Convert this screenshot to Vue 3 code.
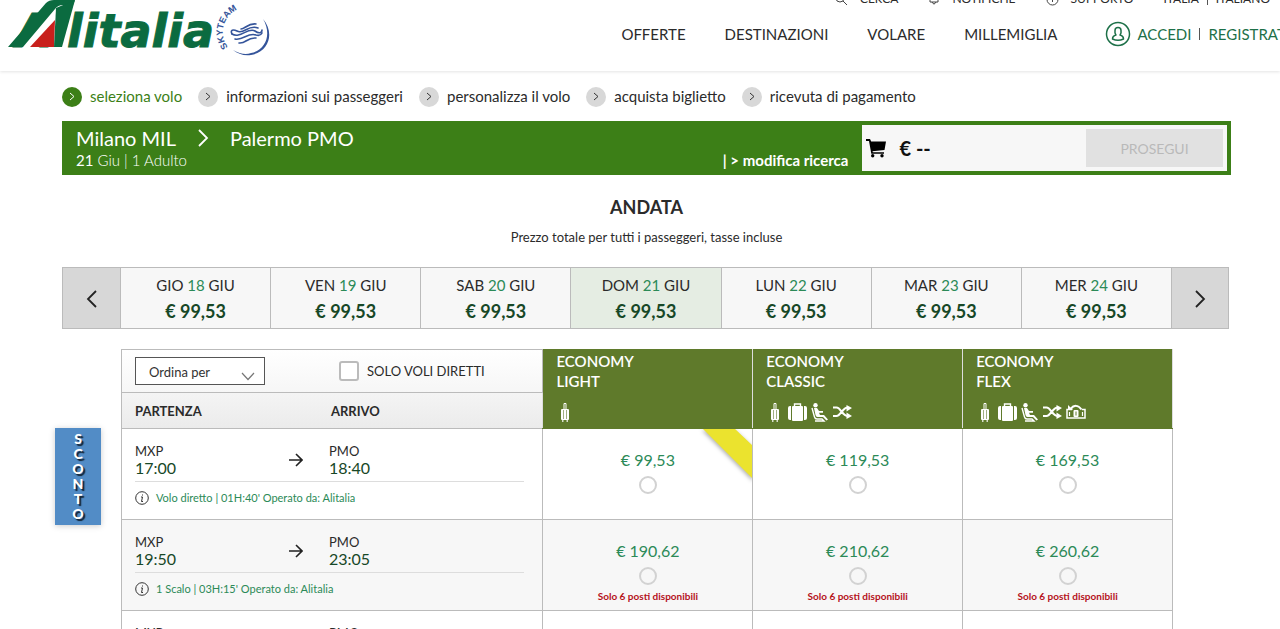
<script setup>
import { ref } from 'vue'

const steps = [
  'seleziona volo',
  'informazioni sui passeggeri',
  'personalizza il volo',
  'acquista biglietto',
  'ricevuta di pagamento',
]

const days = [
  { name: 'GIO', num: 18 },
  { name: 'VEN', num: 19 },
  { name: 'SAB', num: 20 },
  { name: 'DOM', num: 21 },
  { name: 'LUN', num: 22 },
  { name: 'MAR', num: 23 },
  { name: 'MER', num: 24 },
]
const selectedDay = ref(21)

const fares = [
  { name: 'LIGHT', icons: ['trolley'] },
  { name: 'CLASSIC', icons: ['trolley', 'bag', 'seat', 'change'] },
  { name: 'FLEX', icons: ['trolley', 'bag', 'seat', 'change', 'refund'] },
]

const flights = [
  { dep: '17:00', arr: '18:40', info: "Volo diretto | 01H:40' Operato da: Alitalia", prices: ['99,53', '119,53', '169,53'], best: 0 },
  { dep: '19:50', arr: '23:05', info: "1 Scalo | 03H:15' Operato da: Alitalia", prices: ['190,62', '210,62', '260,62'], seats: 'Solo 6 posti disponibili' },
  { prices: ['', '', ''] },
]
const choice = ref('')
const directOnly = ref(false)
</script>

<template>
  <div class="page">
    <header class="header">
      <a class="brand" href="#" aria-label="Alitalia SkyTeam">
        <svg width="280" height="64" viewBox="0 0 280 64">
          <text class="word" x="16" y="47" font-size="46">A</text>
          <path d="M20 47L55 6L56 47Z" fill="#fff" />
          <path d="M8 47L46 3Q49 0 54 0H75L73 5H63Q58 5 55 9L23 47Z" fill="#0b6b40" />
          <path d="M30 47L55 20L54 47Z" fill="#c8201c" />
          <path d="M56 8L75 0L62 47H54Z" fill="#0b6b40" />
          <text class="word" x="67" y="47" font-size="46">litalia</text>
          <path id="sky-arc" d="M228 47A23 23 0 0 1 266 17" fill="none" />
          <text class="sky" font-size="9"><textPath href="#sky-arc">SKYTEAM</textPath></text>
          <path d="M263 19C275 33 269 52 251 55C244 56 238 54 233 50C240 54 246 55 251 53C266 50 272 34 263 19Z" fill="#34549a" />
          <g fill="none" stroke="#34549a" stroke-width="1.600" stroke-linecap="round">
            <path d="M232 34C230 30 233 29 237 31C244 35 248 24 258 28" />
            <path d="M232 34C240 39 248 27 255 31C259 34 262 33 262 30" />
            <path d="M235 39C243 41 248 32 256 35C259 36 261 35 262 33" />
            <path d="M239 43C246 44 247 37 256 38" />
            <path d="M241 29C245 29 248 23 256 24" />
          </g>
        </svg>
      </a>
      <div class="menus">
        <div class="utility">
          <a href="#"><svg width="13" height="13" viewBox="0 0 13 13" class="line"><circle cx="5" cy="5" r="4" /><path d="M8 8l4 4" /></svg>CERCA</a>
          <a href="#"><svg width="12" height="12" viewBox="0 0 12 12" class="line"><path d="M2 9V5a4 4 0 0 1 8 0v4zM4 9q2 4 4 0" /></svg>NOTIFICHE</a>
          <a href="#"><svg width="13" height="13" viewBox="0 0 13 13" class="line"><circle cx="6.500" cy="6.500" r="5.500" /><path d="M5 5q1.500-2 3 0l-1.500 2v2" /></svg>SUPPORTO</a>
          <span class="locale"><a href="#">ITALIA</a><i></i><a href="#">ITALIANO</a></span>
        </div>
        <div class="mainrow">
          <nav class="nav">
            <a href="#">OFFERTE</a>
            <a href="#">DESTINAZIONI</a>
            <a href="#">VOLARE</a>
            <a href="#">MILLEMIGLIA</a>
          </nav>
          <div class="account">
            <svg width="26" height="26" viewBox="0 0 26 26" fill="none" stroke="#1d7048" stroke-width="1.500">
              <circle cx="13" cy="13" r="11.500" />
              <path d="M10 12V9.500Q10 6.500 13 6.500T16 9.500V12L15 14Q18.500 15 18.500 18Q13 20.500 7.500 18Q7.500 15 11 14Z" stroke-linejoin="round" />
            </svg>
            <a href="#">ACCEDI</a><i></i><a href="#">REGISTRATI</a>
          </div>
        </div>
      </div>
    </header>

    <main>
      <ol class="steps">
        <li v-for="(s, i) in steps" :key="s" :class="{ active: i === 0 }">
          <span class="dot"><svg width="6" height="10" viewBox="0 0 6 10"><path d="M1 1l4 3.500-4 3.500" /></svg></span>{{ s }}
        </li>
      </ol>

      <section class="route">
        <div class="trip">
          <div class="cities">
            <span>Milano MIL</span>
            <svg width="12" height="20" viewBox="0 0 12 20"><path d="M2 2l8 8-8 8" fill="none" stroke="#fff" stroke-width="1.800" /></svg>
            <span>Palermo PMO</span>
          </div>
          <div class="detail"><b>21</b> Giu | 1 Adulto</div>
        </div>
        <a class="modify" href="#">| &gt; modifica ricerca</a>
        <div class="cart">
          <svg width="21" height="20" viewBox="0 0 21 20">
            <path d="M0 1h4l1.200 2.500H20L18.500 12 6.500 13.200l.3 1H18v1.600H5.300L3 3H0z" />
            <circle cx="6.700" cy="17.800" r="1.700" /><circle cx="16" cy="17.800" r="1.700" />
          </svg>
          <strong>€ --</strong>
          <button class="proceed" disabled>PROSEGUI</button>
        </div>
      </section>

      <h1>ANDATA</h1>
      <p class="note">Prezzo totale per tutti i passeggeri, tasse incluse</p>

      <div class="days">
        <button class="arrow" aria-label="Giorni precedenti"><svg width="12" height="20" viewBox="0 0 12 20"><path d="M10 2L2 10l8 8" /></svg></button>
        <button v-for="d in days" :key="d.num" class="day" :class="{ sel: d.num === selectedDay }" @click="selectedDay = d.num">
          <span>{{ d.name }} <em>{{ d.num }}</em> GIU</span>
          <strong>€ 99,53</strong>
        </button>
        <button class="arrow" aria-label="Giorni successivi"><svg width="12" height="20" viewBox="0 0 12 20"><path d="M2 2l8 8-8 8" /></svg></button>
      </div>

      <div class="results">
        <table>
          <colgroup>
            <col class="c-dep" /><col class="c-arr" /><col class="c-fare" /><col class="c-fare" /><col class="c-fare" />
          </colgroup>
          <thead>
            <tr class="tools">
              <td colspan="2">
                <div class="toolbar">
                  <span class="sort">
                    <select aria-label="Ordina per"><option>Ordina per</option></select>
                    <svg width="14" height="9" viewBox="0 0 14 9"><path d="M1 1l6 6.500L13 1" fill="none" stroke="#777" stroke-width="1.200" /></svg>
                  </span>
                  <label class="direct"><input v-model="directOnly" type="checkbox" />SOLO VOLI DIRETTI</label>
                </div>
              </td>
              <th v-for="f in fares" :key="f.name" rowspan="2" class="fare" scope="col">
                <div>ECONOMY<br />{{ f.name }}</div>
                <div class="icons">
                  <template v-for="ic in f.icons" :key="ic">
                    <svg v-if="ic === 'trolley'" class="trolley" width="10" height="20" viewBox="0 0 10 20">
                      <path d="M4 7V1.500h2V7" fill="none" stroke="#fff" stroke-width="1" />
                      <rect x="1" y="7" width="8" height="11" rx="1" fill="#fff" />
                      <path d="M3.500 8v9M6.500 8v9" stroke="#5f7a2b" stroke-width=".6" /><path d="M2 19h1.500M6.500 19H8" stroke="#fff" stroke-width="1.500" />
                    </svg>
                    <svg v-else-if="ic === 'bag'" width="19" height="18" viewBox="0 0 19 18" fill="#fff">
                      <rect x="4" y="3" width="11" height="15" rx="1" />
                      <path d="M3 3H2Q0 3 0 5v10q0 2 2 2h1zM16 3h1q2 0 2 2v10q0 2-2 2h-1z" />
                      <path d="M6.500 3V1h6v2" fill="none" stroke="#fff" stroke-width="1.400" />
                    </svg>
                    <svg v-else-if="ic === 'seat'" width="18" height="19" viewBox="0 0 18 19">
                      <circle cx="4.500" cy="2.200" r="2.200" fill="#fff" />
                      <path d="M3 5h3l2 3h4v1.700H8L9 12h4l4 4.500-1.500 1L12 14H6.500Q5 14 4.500 12z" fill="#fff" />
                      <path d="M1 5l2.500 9q.5 2 2.500 2h5l2 2H4" fill="none" stroke="#fff" stroke-width="1.400" />
                    </svg>
                    <svg v-else-if="ic === 'change'" width="19" height="14" viewBox="0 0 19 14">
                      <path d="M0 2.500h3.500C8 2.500 9 11 15 11M0 11h3.500C8 11 9 2.500 15 2.500" fill="none" stroke="#fff" stroke-width="2.200" />
                      <path d="M13.500 0L19 3l-5.500 3.500zM13.500 7.500L19 11l-5.500 3z" fill="#fff" />
                    </svg>
                    <svg v-else width="20" height="16" viewBox="0 0 20 16">
                      <path d="M6 5.500H1V14h18V5.500h-3" fill="none" stroke="#fff" stroke-width="1.500" />
                      <path d="M4.500 5Q10-1.500 15.500 5.500" fill="none" stroke="#fff" stroke-width="2" />
                      <path d="M2 1v5h5z" fill="#fff" />
                      <path d="M3.500 8v4M16.500 8v4" stroke="#fff" stroke-width="1.200" />
                      <rect x="7.500" y="6" width="5" height="7" rx="1" fill="#fff" /><path d="M10 7.500v4" stroke="#5f7a2b" />
                    </svg>
                  </template>
                </div>
              </th>
            </tr>
            <tr class="heads">
              <th scope="col" class="h-dep">PARTENZA</th>
              <th scope="col" class="h-arr">ARRIVO</th>
            </tr>
          </thead>
          <tbody>
            <tr v-for="(f, i) in flights" :key="i">
              <td colspan="2" class="flight">
                <div class="legs">
                  <div class="from"><span>MXP</span><time>{{ f.dep }}</time></div>
                  <svg v-if="f.dep" width="14" height="14" viewBox="0 0 14 14"><path d="M0 7h12.500M7 1l6 6-6 6" /></svg>
                  <span v-else class="gap"></span>
                  <div class="to"><span>PMO</span><time>{{ f.arr }}</time></div>
                </div>
                <a v-if="f.info" class="info" href="#">
                  <svg width="14" height="14" viewBox="0 0 14 14"><circle cx="7" cy="7" r="6.300" /><path d="M6 6h1.500L6.500 10.500H8M7.500 3.500v1" /></svg>{{ f.info }}
                </a>
              </td>
              <td v-for="(p, j) in f.prices" :key="j" class="price">
                <svg v-if="f.best === j" class="ribbon" width="56" height="56" viewBox="0 0 56 56"><path d="M6 -1H38L57 17V50Z" fill="#ebe32e" /></svg>
                <label v-if="p">
                  <span>€ {{ p }}</span>
                  <input v-model="choice" type="radio" name="fare" :value="i + '-' + j" />
                </label>
                <small v-if="f.seats">{{ f.seats }}</small>
              </td>
            </tr>
          </tbody>
        </table>
      </div>
    </main>

    <button class="sconto" aria-label="Sconto"><span v-for="(c, i) in 'SCONTO'" :key="i">{{ c }}</span></button>
  </div>
</template>

<style>
body {
  background: #fff;
}
</style>

<style scoped>
* {
  box-sizing: border-box;
}
.page {
  position: relative;
  height: 100vh;
  overflow: hidden;
  font-family: Lato, "Open Sans", sans-serif;
  color: #2b2b2b;
}
a {
  color: inherit;
  text-decoration: none;
}
button {
  font-family: inherit;
  color: inherit;
  border: 0;
  padding: 0;
  cursor: pointer;
}
.header {
  display: flex;
  justify-content: space-between;
  height: 71px;
  overflow: hidden;
  box-shadow: 0 1px 3px #e4e4e4;
}
.brand svg {
  display: block;
}
.word {
  font-family: "DejaVu Sans", sans-serif;
  font-weight: 700;
  font-style: italic;
  fill: #0b6b40;
  stroke: #0b6b40;
  stroke-width: 1px;
}
.sky {
  font-family: "Liberation Sans", sans-serif;
  font-weight: 700;
  fill: #34549a;
}
.menus {
  flex: none;
  margin-right: -10px;
  white-space: nowrap;
}
.utility {
  display: flex;
  justify-content: flex-end;
  gap: 30px;
  margin-top: -9px;
  padding-right: 20px;
  font-size: 12px;
  line-height: 16px;
}
.utility > a {
  display: flex;
  align-items: center;
  gap: 12px;
}
.line {
  fill: none;
  stroke: #444;
}
.locale {
  display: flex;
  align-items: center;
}
.locale i,
.account i {
  width: 1px;
  height: 12px;
  margin: 0 8px;
  background: #555;
}
.mainrow {
  display: flex;
  align-items: center;
  justify-content: flex-end;
  margin-top: 14px;
  font-size: 15px;
}
.nav {
  display: flex;
  gap: 39px;
}
.account {
  display: flex;
  align-items: center;
  margin-left: 48px;
  color: #1d7048;
}
.account svg {
  margin-right: 6px;
}
main {
  padding: 0 49px 0 62px;
}
.steps {
  display: flex;
  gap: 16px;
  margin: 15px 0 14px;
  padding: 0;
  list-style: none;
  font-size: 15px;
  line-height: 21px;
}
.steps li {
  display: flex;
  align-items: center;
  gap: 8px;
}
.dot {
  display: flex;
  justify-content: center;
  align-items: center;
  width: 20px;
  height: 20px;
  border-radius: 50%;
  background: #d8d8d8;
}
.dot path {
  fill: none;
  stroke: #333;
}
.active {
  color: #3c7f17;
}
.active .dot {
  background: #3c7f17;
}
.active path {
  stroke: #fff;
}
.route {
  display: flex;
  height: 54px;
  padding: 4px;
  background: #3c7f17;
  color: #fff;
}
.trip {
  flex: 1;
  padding-left: 10px;
}
.cities {
  display: flex;
  align-items: center;
  gap: 21px;
  font-size: 20px;
  line-height: 26px;
}
.detail {
  font-size: 15px;
  font-weight: 300;
  line-height: 18px;
}
.detail b {
  font-weight: 400;
}
.modify {
  align-self: flex-end;
  margin-right: 14px;
  font-size: 15px;
  font-weight: 700;
  line-height: 22px;
}
.cart {
  display: flex;
  align-items: center;
  width: 31.400%;
  padding: 0 4px;
  background: #f7f7f7;
  color: #111;
}
.cart strong {
  flex: 1;
  margin-left: 12px;
  font-size: 20px;
}
.proceed {
  width: 137px;
  height: 38px;
  background: #e1e1e1;
  color: #b9b9b9;
  font-size: 14px;
}
h1 {
  margin: 20px 0 0;
  font-size: 18px;
  line-height: 24px;
  text-align: center;
}
.note {
  margin: 9px 0 21px;
  font-size: 13px;
  line-height: 18px;
  text-align: center;
}
.days {
  display: flex;
  height: 62px;
  margin-right: 2px;
  border: 1px solid #bbb;
}
.days button + button {
  border-left: 1px solid #bbb;
}
.arrow {
  width: 57px;
  background: #d7d7d7;
}
.arrow svg {
  display: block;
  margin: 2px auto 0;
}
.arrow path {
  fill: none;
  stroke: #222;
  stroke-width: 1.800;
}
.day {
  display: flex;
  flex: 1;
  flex-direction: column;
  justify-content: center;
  align-items: center;
  background: #f7f7f7;
  font-size: 15px;
  line-height: 26px;
}
.day em {
  font-style: normal;
  color: #2c8a57;
}
.day strong {
  color: #174827;
  font-size: 18px;
}
.day.sel {
  background: #e5ede3;
}
.results {
  margin: 20px 58px 0 59px;
}
table {
  width: 100%;
  table-layout: fixed;
  border-collapse: collapse;
}
td,
th {
  padding: 0;
  border: 1px solid #bbb;
}
.c-dep {
  width: 18.600%;
}
.c-arr {
  width: 21.500%;
}
.tools {
  height: 43px;
  background: linear-gradient(#fff, #f6f6f6);
}
.toolbar {
  display: flex;
  align-items: center;
  padding-left: 13px;
}
.sort {
  position: relative;
  width: 130px;
  height: 28px;
}
.sort select {
  width: 100%;
  height: 100%;
  padding: 2px 0 0 13px;
  appearance: none;
  border: 1px solid #555;
  border-radius: 0;
  background: #fff;
  color: #333;
  font: 13px Lato, sans-serif;
}
.sort svg {
  position: absolute;
  right: 10px;
  bottom: 4px;
}
.direct {
  display: flex;
  align-items: center;
  gap: 8px;
  margin-left: 74px;
  font-size: 13px;
}
.direct input {
  appearance: none;
  width: 20px;
  height: 20px;
  margin: 0;
  border: 2px solid #bbb;
  border-radius: 3px;
  background: #fff;
}
.direct input:checked {
  background: #3c7f17;
}
.heads {
  height: 36px;
  background: linear-gradient(#f4f4f4, #ebebeb);
  font-size: 13px;
  text-align: left;
}
.h-dep {
  padding-left: 13px;
  border-right: 0;
}
.h-arr {
  padding-left: 14px;
  border-left: 0;
}
.fare {
  padding: 1px 13px 0;
  border-color: #5f7a2b #ddd;
  background: #5f7a2b;
  color: #fff;
  font-size: 15px;
  font-weight: 600;
  line-height: 20px;
  text-align: left;
  vertical-align: top;
}
.icons {
  display: flex;
  align-items: center;
  gap: 4px;
  height: 20px;
  margin-top: 11px;
}
.trolley {
  margin: 0 4px;
}
tbody tr {
  height: 91px;
}
tbody tr:nth-child(even) {
  background: #f7f7f7;
}
.flight {
  padding: 14px 18px 0 13px;
  vertical-align: top;
}
.legs {
  display: flex;
  align-items: center;
  padding-bottom: 5px;
  border-bottom: 1px solid #ddd;
}
.legs span,
.legs time {
  display: block;
  font-size: 13px;
  line-height: 17px;
}
.legs time {
  min-height: 16px;
  color: #174827;
  font-size: 16px;
  line-height: 16px;
}
.from {
  width: 154px;
}
.legs .gap {
  width: 14px;
}
.to {
  margin-left: 26px;
}
.legs path {
  fill: none;
  stroke: #222;
  stroke-width: 1.600;
}
.info {
  display: flex;
  align-items: center;
  gap: 7px;
  margin-top: 8px;
  color: #2c8a57;
  font-size: 11px;
  line-height: 16px;
}
.info svg {
  fill: none;
  stroke: #333;
}
.price {
  position: relative;
  overflow: hidden;
  padding-top: 21px;
  text-align: center;
  vertical-align: top;
}
.price label {
  display: flex;
  flex-direction: column;
  align-items: center;
  gap: 6px;
  color: #2c8a57;
  font-size: 16px;
  line-height: 20px;
}
.price input {
  appearance: none;
  width: 18px;
  height: 18px;
  margin: 0;
  border: 2px solid #d2d2d2;
  border-radius: 50%;
}
.price input:checked {
  background: #3c7f17;
}
.price small {
  display: block;
  margin-top: 4px;
  color: #b5121b;
  font-size: 10px;
  font-weight: 700;
  line-height: 14px;
}
.ribbon {
  position: absolute;
  top: 0;
  right: 0;
}
.ribbon path {
  filter: drop-shadow(0 2px 2px #aaa);
}
.sconto {
  position: absolute;
  top: 428px;
  left: 55px;
  display: flex;
  flex-direction: column;
  align-items: center;
  justify-content: center;
  width: 46px;
  height: 97px;
  padding-bottom: 2px;
  background: #528cc6;
  box-shadow: 0 1px 6px #ccc;
  color: #fff;
  font-size: 14px;
  font-weight: 900;
  line-height: 15px;
  text-shadow: 2px 2px 1px #123;
}
</style>
